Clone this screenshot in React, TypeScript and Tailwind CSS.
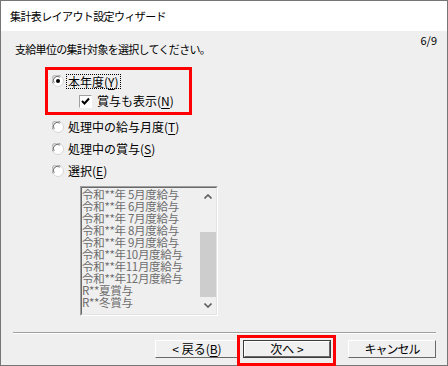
import type { ReactNode } from "react";

const ITEMS = [
  "令和**年 5月度給与",
  "令和**年 6月度給与",
  "令和**年 7月度給与",
  "令和**年 8月度給与",
  "令和**年 9月度給与",
  "令和**年10月度給与",
  "令和**年11月度給与",
  "令和**年12月度給与",
  "R**夏賞与",
  "R**冬賞与",
];

function Radio({ checked }: { checked?: boolean }) {
  return (
    <svg width="12" height="12" viewBox="0 0 12 12" className="shrink-0">
      <circle cx="6" cy="6" r="5.5" fill="#ffffff" stroke="#d6d6d6" />
      <path d="M1.2 8.5 A5 5 0 0 1 8.5 1.2" fill="none" stroke="#a0a0a0" strokeWidth="1" />
      <path d="M2.2 7.8 A4 4 0 0 1 7.8 2.2" fill="none" stroke="#696969" strokeWidth="1" />
      {checked && <circle cx="6" cy="6" r="2" fill="#000000" />}
    </svg>
  );
}

function Check() {
  return (
    <span className="flex h-[13px] w-[13px] shrink-0 items-center justify-center border border-t-[#a0a0a0] border-l-[#a0a0a0] border-r-white border-b-white bg-white">
      <svg width="9" height="9" viewBox="0 0 9 9">
        <path d="M1 4 L3.5 6.5 L8 1.5" fill="none" stroke="#000" strokeWidth="2" />
      </svg>
    </span>
  );
}

/** Label with one underlined access key, e.g. 本年度(Y) */
function Label({ text, k }: { text: string; k: string }) {
  return (
    <span>
      {text}(<span className="underline underline-offset-2">{k}</span>)
    </span>
  );
}

function Button({ children, primary }: { children: ReactNode; primary?: boolean }) {
  return (
    <div className={`h-[18px] ${primary ? "border border-[#3c3c3c]" : ""}`}>
      <div className="flex h-full items-center justify-center border border-t-white border-l-white border-r-[#696969] border-b-[#696969] bg-[#f0f0f0]">
        {children}
      </div>
    </div>
  );
}

export default function App() {
  return (
    <div className="flex h-[366px] w-[448px] flex-col border border-[#767676] bg-[#efefef] font-['Noto_Sans_CJK_JP',sans-serif] text-[12px] text-black">
      {/* Title */}
      <div className="flex h-[30px] shrink-0 items-center bg-white pl-[9px] text-[11px] tracking-[-0.6px]">
        集計表レイアウト設定ウィザード
      </div>

      {/* Header line */}
      <div className="flex items-start justify-between pl-[14px] pr-[10px] pt-[2px]">
        <span className="mt-[8px] text-[11px] leading-[16px] tracking-[-0.7px]">
          支給単位の集計対象を選択してください。
        </span>
        <span className="text-[11px] leading-[14px]">6/9</span>
      </div>

      {/* Highlighted option */}
      <div className="ml-[44px] mt-[10px] h-[48px] w-[147px] border-[3px] border-[#ff0000] pt-[1px]">
        <div className="flex h-[20px] items-center pl-[4px]">
          <Radio checked />
          <span className="ml-[2px] border border-dotted border-black px-[1px] leading-[13px]">
            <Label text="本年度" k="Y" />
          </span>
        </div>
        <div className="flex h-[20px] items-center gap-[5px] pl-[31px]">
          <Check />
          <Label text="賞与も表示" k="N" />
        </div>
      </div>

      {/* Other options */}
      <div className="mt-[1px] flex flex-col">
        {[
          ["処理中の給与月度", "T"],
          ["処理中の賞与", "S"],
          ["選択", "E"],
        ].map(([t, k]) => (
          <div key={k} className="flex h-[22px] items-center gap-[4px] pl-[51px]">
            <Radio />
            <Label text={t} k={k} />
          </div>
        ))}
      </div>

      {/* List box (disabled) */}
      <div className="ml-[79px] mt-[4px] h-[130px] w-[138px] border border-t-[#a0a0a0] border-l-[#a0a0a0] border-r-white border-b-white">
        <div className="flex h-full border border-t-[#696969] border-l-[#696969] border-r-[#e3e3e3] border-b-[#e3e3e3]">
          <div className="flex-1 overflow-hidden text-[#6d6d6d]">
            {ITEMS.map((it) => (
              <div key={it} className="h-[12px] whitespace-pre text-[11.5px] leading-[12px] tracking-[-0.3px]">
                {it}
              </div>
            ))}
          </div>
          <div className="flex w-[16px] flex-col bg-[#f0f0f0]">
            <div className="flex h-[17px] items-center justify-center">
              <svg width="8" height="5" viewBox="0 0 8 5">
                <path d="M0.5 4.5 L4 1 L7.5 4.5" fill="none" stroke="#606060" strokeWidth="1.6" />
              </svg>
            </div>
            <div className="mt-[27px] h-[67px] bg-[#cdcdcd]" />
            <div className="flex-1" />
            <div className="flex h-[17px] items-center justify-center">
              <svg width="8" height="5" viewBox="0 0 8 5">
                <path d="M0.5 0.5 L4 4 L7.5 0.5" fill="none" stroke="#606060" strokeWidth="1.6" />
              </svg>
            </div>
          </div>
        </div>
      </div>

      {/* Separator */}
      <div className="ml-[12px] mr-[11px] mt-[16px] border-t border-b border-t-[#a0a0a0] border-b-white" />

      {/* Buttons */}
      <div className="mt-[6px] flex justify-end pr-[11px]">
        <div className="w-[84px]">
          <Button>
            <span>&lt; 戻る(<span className="underline underline-offset-2">B</span>)</span>
          </Button>
        </div>
        <div className="relative ml-[4px] w-[88px]">
          <Button primary>
            <span>次へ &gt;</span>
          </Button>
          <div className="absolute -bottom-[8px] -left-[6px] -right-[5px] -top-[5px] border-[3px] border-[#ff0000]" />
        </div>
        <div className="ml-[17px] w-[88px]">
          <Button>
            <span className="tracking-[-1px]">キャンセル</span>
          </Button>
        </div>
      </div>
    </div>
  );
}
